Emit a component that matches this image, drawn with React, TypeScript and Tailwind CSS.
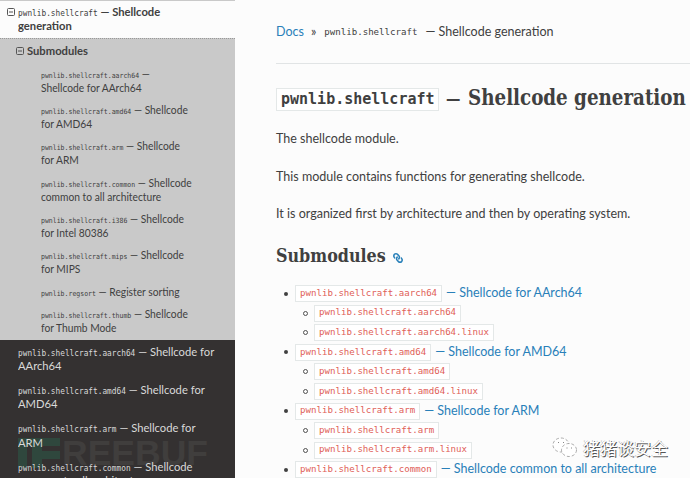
import React from "react";
import { FaLink } from "react-icons/fa";

const subs: [string, string, string?][] = [
  ["pwnlib.shellcraft.aarch64", "—", "Shellcode for AArch64"],
  ["pwnlib.shellcraft.amd64", "— Shellcode", "for AMD64"],
  ["pwnlib.shellcraft.arm", "— Shellcode", "for ARM"],
  ["pwnlib.shellcraft.common", "— Shellcode", "common to all architecture"],
  ["pwnlib.shellcraft.i386", "— Shellcode", "for Intel 80386"],
  ["pwnlib.shellcraft.mips", "— Shellcode", "for MIPS"],
  ["pwnlib.regsort", "— Register sorting"],
  ["pwnlib.shellcraft.thumb", "— Shellcode", "for Thumb Mode"],
];

const chapters: [string, string, string][] = [
  ["pwnlib.shellcraft.aarch64", "— Shellcode for", "AArch64"],
  ["pwnlib.shellcraft.amd64", "— Shellcode for", "AMD64"],
  ["pwnlib.shellcraft.arm", "— Shellcode for", "ARM"],
  ["pwnlib.shellcraft.common", "— Shellcode", "common to all architecture"],
];

const modules: { name: string; title: string; children: string[] }[] = [
  { name: "pwnlib.shellcraft.aarch64", title: "Shellcode for AArch64", children: ["pwnlib.shellcraft.aarch64", "pwnlib.shellcraft.aarch64.linux"] },
  { name: "pwnlib.shellcraft.amd64", title: "Shellcode for AMD64", children: ["pwnlib.shellcraft.amd64", "pwnlib.shellcraft.amd64.linux"] },
  { name: "pwnlib.shellcraft.arm", title: "Shellcode for ARM", children: ["pwnlib.shellcraft.arm", "pwnlib.shellcraft.arm.linux"] },
  { name: "pwnlib.shellcraft.common", title: "Shellcode common to all architecture", children: [] },
];

function Collapse() {
  return (
    <svg viewBox="0 0 8 8" className="h-2 w-2 shrink-0" fill="none" stroke="#555" strokeWidth="1">
      <rect x="0.5" y="0.5" width="7" height="7" rx="1" />
      <path d="M2 4H6" />
    </svg>
  );
}

function Code({ children }: { children: string }) {
  return (
    <code className="flex h-[17px] items-center border border-[#e4e8e8] bg-white px-1 font-['DejaVu_Sans_Mono',monospace] text-[9.12px] text-[#e06058]">
      {children}
    </code>
  );
}

function Sidebar() {
  return (
    <nav className="relative h-[478px] w-[235px] shrink-0 overflow-hidden bg-[#343131] text-[12.2px] leading-[14.4px]">
      <div className="h-[38px] border-t border-[#c9c9c9] bg-[#fcfcfc] pt-[4px] font-bold text-[#404040]">
        <div className="flex h-[14.4px] items-center pl-[7px]">
          <Collapse />
          <div className="ml-[3px] h-[14.4px] origin-left scale-x-[0.92] whitespace-nowrap">
            <span className="font-['DejaVu_Sans_Mono',monospace] text-[8.48px] font-normal">pwnlib.shellcraft</span> — Shellcode
          </div>
        </div>
        <div className="ml-[18px] origin-left scale-x-[0.92]">generation</div>
      </div>
      <div className="h-[302px] border-t border-dotted border-[#999] bg-[#c9c9c9] pt-[5px] text-[#404040]">
        <div className="flex h-[14.4px] items-center pl-[16px] font-bold">
          <Collapse />
          <span className="ml-[3px] origin-left scale-x-[0.92]">Submodules</span>
        </div>
        <div className="pt-[4px] text-[11.2px] leading-[14px]">
          {subs.map(([name, first, second]) => (
            <div key={name} className="ml-[41px] origin-left scale-x-[0.915] whitespace-nowrap py-[4.2px]">
              <div className="h-[14px]">
                <span className="font-['DejaVu_Sans_Mono',monospace] text-[7.13px]">{name}</span> {first}
              </div>
              {second && <div className="h-[14px]">{second}</div>}
            </div>
          ))}
        </div>
      </div>
      <div className="absolute left-[18px] top-[437px] flex items-center">
        <svg viewBox="0 0 42 30" className="h-[32px] w-[42px]" fill="#2f473d">
          <path d="M0 0H42V8H24V13H42V21H24V30H14V8H9V30H0Z" />
        </svg>
        <span className="ml-[2px] font-['Liberation_Sans',sans-serif] text-[35.5px] font-bold leading-[30px] text-[#403e3d]">REEBUF</span>
      </div>
      <div className="relative text-[#d9d9d9]">
        {chapters.map(([name, first, second]) => (
          <div key={name} className="ml-[18px] h-[38.4px] origin-left scale-x-[0.92] whitespace-nowrap pt-[4.6px]">
            <div className="h-[14.4px]">
              <span className="font-['DejaVu_Sans_Mono',monospace] text-[8.48px]">{name}</span> {first}
            </div>
            <div>{second}</div>
          </div>
        ))}
      </div>
    </nav>
  );
}

export default function App() {
  return (
    <div className="relative flex h-[478px] w-[690px] overflow-hidden bg-[#fcfcfc] font-['Lato',sans-serif] text-[#404040]">
      <Sidebar />
      <main className="w-[455px] shrink-0 whitespace-nowrap pl-[41px] text-[12.53px]">
        <div className="flex h-[63px] items-center pt-[2px]">
          <span className="text-[#2980b9]">Docs</span>
          <span className="ml-[7px]">»</span>
          <span className="ml-[8px] font-['DejaVu_Sans_Mono',monospace] text-[9.1px]">pwnlib.shellcraft</span>
          <span className="ml-[8px]">— Shellcode generation</span>
        </div>
        <hr className="border-[#e1e4e5]" />
        <h1 className="mt-[24px] flex h-[23px] items-center font-['DejaVu_Serif_Condensed','DejaVu_Serif',serif] text-[21.5px] font-bold">
          <code className="flex h-[23px] w-[163px] shrink-0 items-center border border-[#e4e8e8] bg-white px-1 font-['DejaVu_Sans_Mono',monospace] text-[15px]">pwnlib.shellcraft</code>
          <span className="ml-[7px] w-[22px] shrink-0 text-[16px]">—</span>
          <span className="shrink-0 origin-left scale-x-[0.945] -translate-y-px">Shellcode generation</span>
        </h1>
        <div className="mt-[9px] leading-[37.5px]">
          <p>The shellcode module.</p>
          <p>This module contains functions for generating shellcode.</p>
          <p>It is organized first by architecture and then by operating system.</p>
        </div>
        <h2 className="mt-[11px] flex h-[24px] items-center font-['DejaVu_Serif_Condensed','DejaVu_Serif',serif] text-[18px] font-bold">
          <span className="w-[117px]"><span className="inline-block origin-left scale-x-[0.985]">Submodules</span></span>
          <FaLink className="mt-1 size-[10px] -scale-x-100 text-[#2980b9]" />
        </h2>
        <ul className="mt-[16.5px]">
          {modules.map((m) => (
            <li key={m.name}>
              <div className="flex h-[19.55px] items-center pl-[8px]">
                <span className="mr-[7px] size-1 rounded-full bg-[#404040]" />
                <Code>{m.name}</Code>
                <span className="ml-[4px] text-[12.5px] text-[#2980b9]">— {m.title}</span>
              </div>
              <ul>
                {m.children.map((c) => (
                  <li key={c} className="flex h-[19.55px] items-center pl-[27px]">
                    <span className="mr-[6px] size-[5px] rounded-full border border-[#505050]" />
                    <Code>{c}</Code>
                  </li>
                ))}
              </ul>
            </li>
          ))}
        </ul>
      </main>
      <div className="absolute left-[552px] top-[437px] flex items-center">
        <svg viewBox="0 0 26 22" className="h-[22px] w-[26px]" fill="#fff" stroke="#888" strokeWidth="0.7" strokeDasharray="3 2">
          <ellipse cx="9" cy="8" rx="8" ry="7" />
          <ellipse cx="17" cy="13" rx="7.5" ry="6.5" />
          <path d="M6 5.5h1M11 5.5h1M14.5 11h1M19 11h1" stroke="#555" strokeDasharray="none" />
        </svg>
        <span className="ml-[5px] font-['Noto_Sans_CJK_SC',sans-serif] text-[17px] leading-[22px] text-white [text-shadow:1px_1px_0_#555,-0.5px_-0.5px_0_#aaa]">猪猪谈安全</span>
      </div>
    </div>
  );
}
